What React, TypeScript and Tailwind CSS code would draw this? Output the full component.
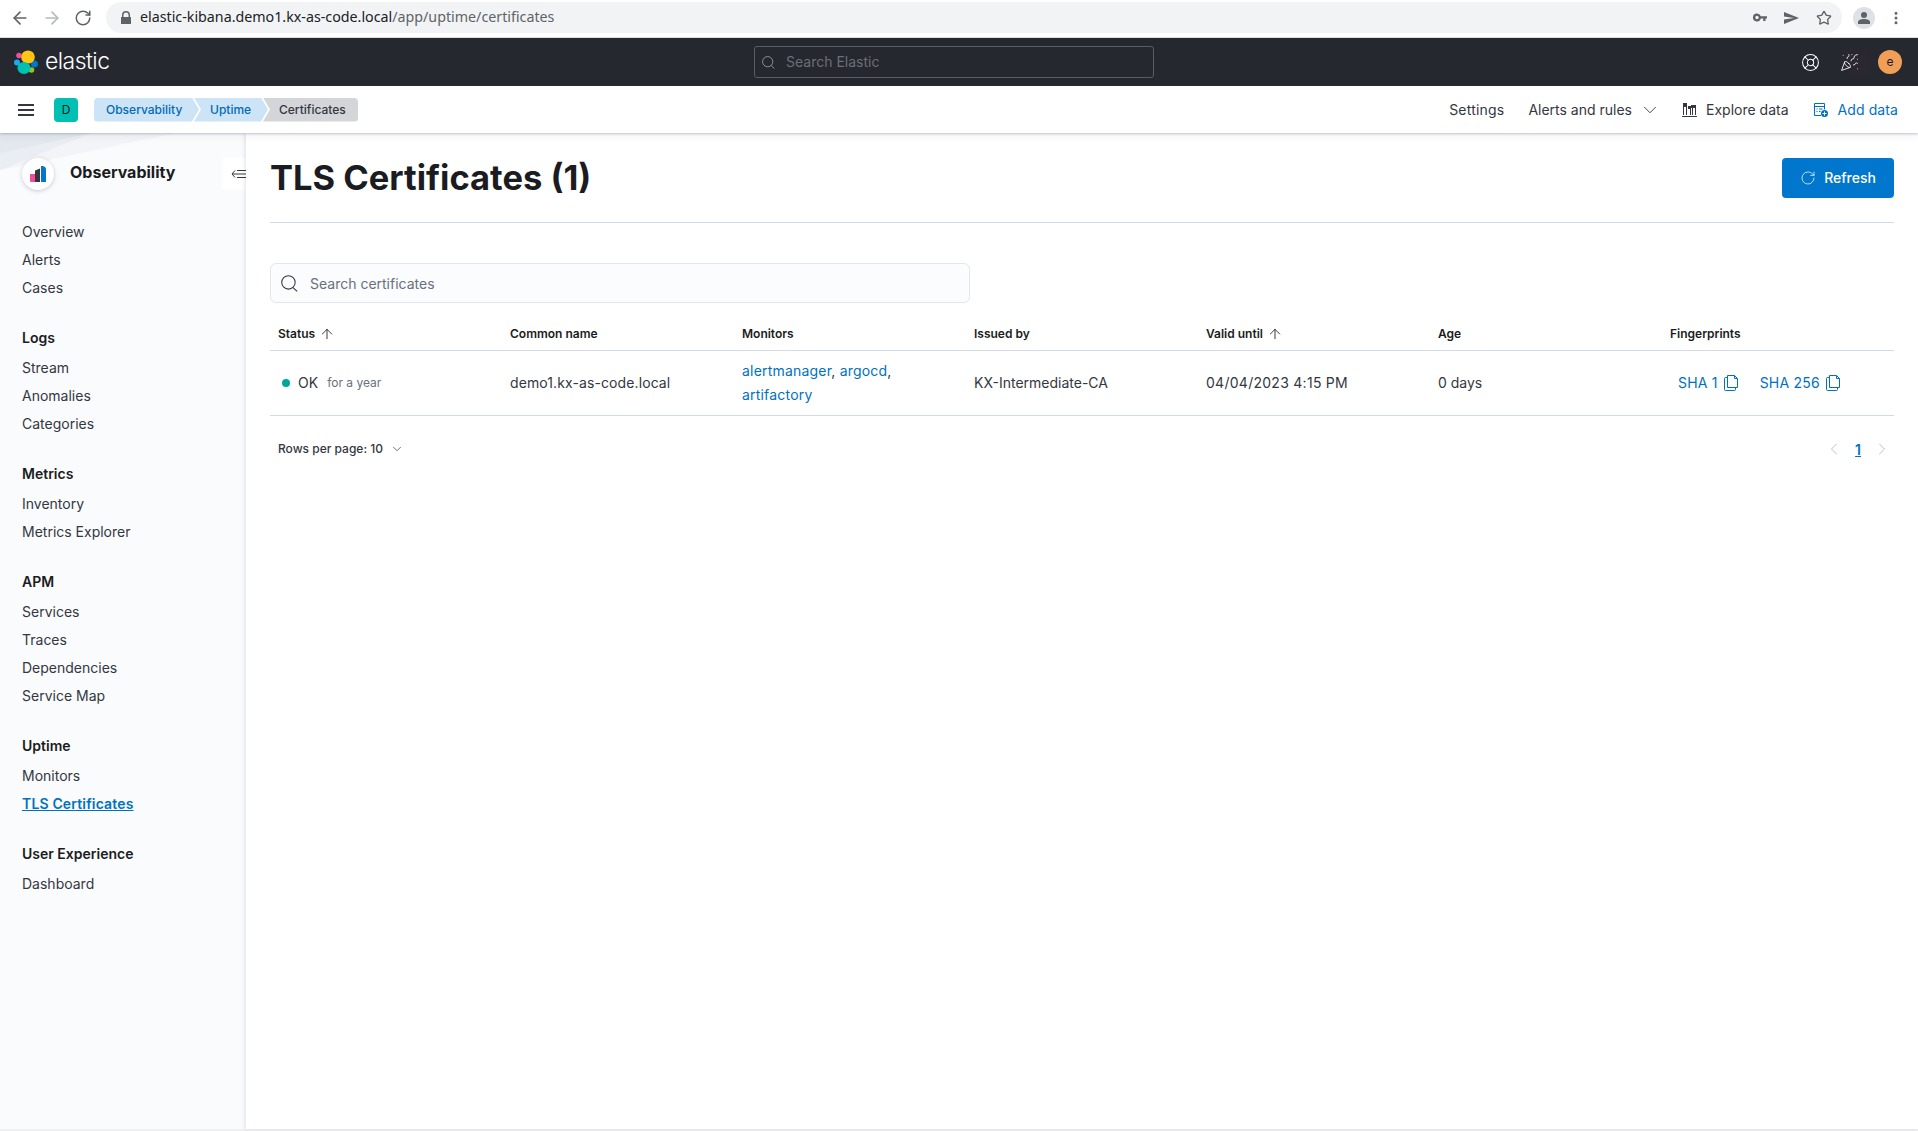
import React from "react";
import { ArrowLeft, ArrowRight, RotateCw, Star, ChevronDown, ChevronLeft, ChevronRight, ArrowUp, LifeBuoy, PartyPopper, EllipsisVertical } from "lucide-react";

function ElasticLogo() {
  return (
    <svg width="24" height="24" viewBox="0 0 24 24">
      <circle cx="5" cy="5.5" r="2.8" fill="#f04e98" />
      <circle cx="3" cy="12.5" r="3" fill="#1ba9f5" />
      <circle cx="20.5" cy="14" r="3.5" fill="#0077cc" />
      <circle cx="17.5" cy="20" r="2.8" fill="#93c90e" />
      <ellipse cx="14" cy="7" rx="6.8" ry="6.6" fill="#fec514" />
      <ellipse cx="10" cy="18" rx="6.6" ry="6" fill="#00bfb3" />
    </svg>
  );
}

function ExploreIcon() {
  return (
    <svg width="15" height="15" viewBox="0 0 15 15" fill="#343741">
      <path d="M0 14h15v1H0z" />
      <path d="M1 1h4v12H4V5H2v8H1z" />
      <path d="M5 4h4v9H8V7H6V4z" />
      <path d="M9 3h5v10h-1V6h-2v7h-1V6H9z" />
    </svg>
  );
}

function AddDataIcon() {
  return (
    <svg width="15" height="15" viewBox="0 0 15 15" fill="none">
      <path d="M8 13.5H1.5v-12h10v6" stroke="#0071c2" strokeWidth="1" />
      <path d="M1.5 4.5h10M3.5 7h1M6 7h3.5M3.5 9.5h1M6 9.5h1.5" stroke="#0071c2" strokeWidth="1" />
      <circle cx="11.5" cy="11.5" r="3.5" fill="#0071c2" />
      <path d="M11.5 9.5v4M9.5 11.5h4" stroke="#fff" strokeWidth="1" />
    </svg>
  );
}

function CopyIcon() {
  return (
    <svg width="15" height="16" viewBox="0 0 15 16" fill="none" stroke="#0071c2" strokeWidth="1">
      <path d="M3.5 .5h7l3 3v9h-10z" />
      <path d="M10.5 .5v3h3" />
      <path d="M3.5 2.5h-2a1 1 0 00-1 1v11a1 1 0 001 1h9a1 1 0 001-1v-2" />
    </svg>
  );
}

function EuiSearch({ stroke = "#343741", size = 16 }: { stroke?: string; size?: number }) {
  return (
    <svg width={size} height={size} viewBox="0 0 16 16" fill="none" stroke={stroke} strokeWidth="1">
      <circle cx="7" cy="7" r="6.3" />
      <path d="M11.3 11.8l3.9 3.7" />
    </svg>
  );
}

const navGroups: { title?: string; items: string[] }[] = [
  { items: ["Overview", "Alerts", "Cases"] },
  { title: "Logs", items: ["Stream", "Anomalies", "Categories"] },
  { title: "Metrics", items: ["Inventory", "Metrics Explorer"] },
  { title: "APM", items: ["Services", "Traces", "Dependencies", "Service Map"] },
  { title: "Uptime", items: ["Monitors", "TLS Certificates"] },
  { title: "User Experience", items: ["Dashboard"] },
];

function BrowserBar() {
  return (
    <div className="h-[38px] bg-white border-b border-[#dadce0] flex items-start shrink-0 pt-[2px] font-['Noto_Sans',sans-serif]">
      <div className="w-[106px] h-[31px] flex items-center pl-[10px] gap-[12px] text-[#5f6368]">
        <ArrowLeft size={20} strokeWidth={2} />
        <ArrowRight size={20} strokeWidth={2} className="text-[#b5b8bb]" />
        <RotateCw size={18} strokeWidth={2} />
      </div>
      <div className="w-[1736px] h-[31px] rounded-full bg-[#f1f3f4] flex items-center pl-[14px] pr-[10px]">
        <svg width="12" height="14" viewBox="0 0 12 14" fill="#5f6368" className="mr-[8px]">
          <path d="M2 6V4a4 4 0 018 0v2h1v7H1V6zm1.5 0h5V4a2.5 2.5 0 00-5 0z" />
        </svg>
        <span className="text-[14.25px] leading-[20px] -mt-[2px] text-[#202124]">
          elastic-kibana.demo1.kx-as-code.local<span className="text-[#5f6368]">/app/uptime/certificates</span>
        </span>
        <div className="ml-auto flex items-center gap-[17px] text-[#5f6368]">
          <svg width="14" height="9" viewBox="0 0 14 8" fill="#5f6368">
            <path d="M4 0a4 4 0 013.8 2.7H14V5h-1.5v2.5h-2.3V5H7.8A4 4 0 114 0zm0 2.3a1.7 1.7 0 100 3.4 1.7 1.7 0 000-3.4z" />
          </svg>
          <svg width="15" height="12" viewBox="0 0 15 12" fill="#5f6368">
            <path d="M0 0l15 6-15 6V7.5L10 6 0 4.5z" />
          </svg>
          <Star size={16} strokeWidth={2} />
        </div>
      </div>
      <div className="flex-1 h-[31px] flex items-center pl-[11px]">
        <div className="w-[22px] h-[22px] rounded-full bg-[#dee1e6] flex items-center justify-center">
          <svg width="12" height="12" viewBox="0 0 12 12" fill="#5f6368">
            <circle cx="6" cy="3" r="3" />
            <path d="M0 12V10c0-2 3-3 6-3s6 1 6 3v2z" />
          </svg>
        </div>
        <EllipsisVertical size={16} strokeWidth={2.5} className="ml-[13px] text-[#5f6368]" />
      </div>
    </div>
  );
}

function DarkHeader() {
  return (
    <div className="h-[48px] bg-[#25282f] flex items-center shrink-0 relative">
      <div className="flex items-center pl-[14px] w-[754px]">
        <ElasticLogo />
        <span className="ml-[7px] -mt-[1px] text-[23px] font-light text-white leading-none tracking-[-0.55px]">elastic</span>
      </div>
      <div className="w-[400px] h-[32px] border border-[#5a5d63] rounded-[3px] flex items-center pl-[7px]">
        <EuiSearch stroke="#a4a6a9" size={13} />
        <span className="ml-[11px] -mt-[1px] text-[14px] text-[#6c6f74]">Search Elastic</span>
      </div>
      <div className="flex-1 flex items-center justify-end pr-[16px] text-white">
        <LifeBuoy size={19} strokeWidth={1.3} />
        <div className="ml-[26px] w-[24px] h-[24px] bg-[#2a2731] rounded-[4px] relative">
          <PartyPopper size={19} strokeWidth={1.1} className="absolute -left-[6px] top-[3px]" />
        </div>
        <div className="ml-[8px] w-[24px] h-[24px] rounded-full bg-[#f19f58] text-[#1a1c21] text-[12px] flex items-center justify-center">e</div>
      </div>
    </div>
  );
}

function SubHeader() {
  return (
    <div className="h-[47px] bg-white flex items-center shrink-0 relative z-10 shadow-[0_1px_2px_rgba(105,112,125,0.35),0_3px_8px_rgba(105,112,125,0.1)] pl-[18px] pr-[20px]">
      <div className="flex flex-col gap-[3px] w-[16px]">
        <div className="h-[2px] bg-[#343741]" />
        <div className="h-[2px] bg-[#343741]" />
        <div className="h-[2px] bg-[#343741]" />
      </div>
      <div className="ml-[20px] w-[24px] h-[24px] rounded-[4px] bg-[#00bfb3] text-[#1a1c21] text-[12px] flex items-center justify-center">D</div>
      <div className="ml-[16px] flex items-center h-[24px] text-[12px] font-medium">
        <div className="w-[105px] h-full bg-[#cce4f5] text-[#006bb8] rounded-l-[4px] pl-[12px] flex items-center [clip-path:polygon(0_0,calc(100%-7px)_0,100%_50%,calc(100%-7px)_100%,0_100%)]">Observability</div>
        <div className="w-[74px] -ml-[5px] h-full bg-[#cce4f5] text-[#006bb8] pl-[16px] flex items-center [clip-path:polygon(0_0,calc(100%-7px)_0,100%_50%,calc(100%-7px)_100%,0_100%,7px_50%)]">Uptime</div>
        <div className="w-[95px] -ml-[5px] h-full bg-[#d3d5d9] text-[#343741] pl-[16px] rounded-r-[4px] flex items-center [clip-path:polygon(0_0,100%_0,100%_100%,0_100%,7px_50%)]">Certificates</div>
      </div>
      <div className="ml-auto flex items-center text-[14px] text-[#343741]">
        <span className="tracking-[0.2px]">Settings</span>
        <span className="ml-[24px]">Alerts and rules</span>
        <ChevronDown size={22} strokeWidth={1} className="ml-[7px]" />
        <span className="ml-[21px]"><ExploreIcon /></span>
        <span className="ml-[9px]">Explore data</span>
        <span className="ml-[24px]"><AddDataIcon /></span>
        <span className="ml-[10px] text-[#0071c2] tracking-[0.1px]">Add data</span>
      </div>
    </div>
  );
}

function Sidebar() {
  return (
    <aside className="w-[246px] shrink-0 bg-[#fafbfd] relative overflow-hidden">
      <svg className="absolute left-0 top-0" width="246" height="40" viewBox="0 0 246 40">
        <path d="M0 0H176L0 37z" fill="#f3f4f7" />
        <path d="M0 0H92L0 37z" fill="#eaedf2" />
        <path d="M0 0H92L0 20z" fill="#e3e7ee" />
      </svg>
      <div className="relative pt-[25px] flex items-center h-[57px]">
        <div className="ml-[22px] w-[32px] h-[32px] rounded-full bg-white shadow-[0_1px_4px_rgba(105,112,125,0.35)] flex items-center justify-center">
          <svg width="16" height="16" viewBox="0 0 16 16">
            <path d="M0 8h5v8H1a1 1 0 01-1-1z" fill="#f04e98" />
            <path d="M5 4.5L10 2.5V16H5z" fill="#343741" />
            <path d="M11 0h1a4 4 0 014 4v12h-5z" fill="#0077cc" />
          </svg>
        </div>
        <span className="ml-[16px] -mt-[4px] text-[16px] font-bold text-[#1a1c21]">Observability</span>
        <div className="ml-auto w-[24px] h-[32px] bg-white rounded-l-[4px] flex items-center justify-end">
          <svg width="15" height="16" viewBox="0 0 15 16" fill="none" stroke="#343741" strokeWidth="1">
            <path d="M4 4.5L1 8l3 3.5M1 8h14M6 4.5h9M6 11.5h9" />
          </svg>
        </div>
      </div>
      <nav className="relative pt-[28px] pl-[22px] flex flex-col gap-[22.1px] text-[14px] text-[#343741]">
        {navGroups.map((g, i) => (
          <div key={i} className="flex flex-col">
            {g.title && <div className="h-[29px] leading-[28px] font-semibold text-[#1a1c21] mb-[1px]">{g.title}</div>}
            {g.items.map((it) =>
              it === "TLS Certificates" ? (
                <div key={it} className="h-[28px] leading-[28px] font-semibold text-[#0071c2] underline tracking-[0.15px]">{it}</div>
              ) : (
                <div key={it} className="h-[28px] leading-[28px]">{it}</div>
              )
            )}
          </div>
        ))}
      </nav>
    </aside>
  );
}

function SortHead({ label }: { label: string }) {
  return (
    <div className="flex items-center gap-[4px]">
      {label}
      <ArrowUp size={16} strokeWidth={1.3} className="text-[#1a1c21]" />
    </div>
  );
}

function Main() {
  const col = "w-[232px] px-[8px]";
  return (
    <main className="flex-1 px-[24px] pt-[25px] min-w-0 bg-white relative shadow-[-1px_0_4px_rgba(105,112,125,0.2)]">
      <div className="h-[65px] border-b border-[#d3dae6] flex items-start justify-between">
        <h1 className="text-[34.5px] leading-[40px] font-bold text-[#1a1c21]">TLS Certificates (1)</h1>
        <button className="w-[112px] h-[40px] rounded-[4px] bg-[#0077cc] text-white text-[14px] font-medium flex items-center justify-center gap-[8px] pb-[1px]">
          <RotateCw size={16} strokeWidth={1.1} />
          Refresh
        </button>
      </div>
      <div className="mt-[40px] w-[700px] h-[40px] bg-[#fbfcfd] border border-[#e3e6ec] rounded-[6px] flex items-center pl-[10px]">
        <EuiSearch stroke="#343741" size={17} />
        <span className="ml-[12px] text-[14px] text-[#69707d]">Search certificates</span>
      </div>
      <div className="text-[14px] text-[#343741]">
        <div className="h-[48px] flex items-center border-b border-[#d3dae6] text-[12px] font-semibold text-[#1a1c21] pt-[15px]">
          <div className={col}><SortHead label="Status" /></div>
          <div className={col}>Common name</div>
          <div className={col}>Monitors</div>
          <div className={col}>Issued by</div>
          <div className={col}><SortHead label="Valid until" /></div>
          <div className={col}>Age</div>
          <div className={col}>Fingerprints</div>
        </div>
        <div className="h-[65px] flex items-center border-b border-[#d3dae6] pb-[1px]">
          <div className={`${col} flex items-center`}>
            <span className="ml-[4px] w-[8px] h-[8px] rounded-full bg-[#00a69b]" />
            <span className="ml-[8px]">OK</span>
            <span className="ml-[9px] mt-[1px] text-[12px] text-[#69707d]">for a year</span>
          </div>
          <div className={`${col} tracking-[0.1px]`}>demo1.kx-as-code.local</div>
          <div className={`${col} leading-[24px] text-[#0071c2] tracking-[0.2px]`}>
            alertmanager<span className="text-[#343741]">,</span> argocd<span className="text-[#343741]">,</span>
            <br />
            artifactory
          </div>
          <div className={col}>KX-Intermediate-CA</div>
          <div className={`${col} tracking-[0.27px]`}>04/04/2023 4:15 PM</div>
          <div className={col}>0 days</div>
          <div className={`${col} flex items-center text-[#0071c2] pl-[16px] tracking-[0.2px]`}>
            <span>SHA 1</span>
            <span className="ml-[6px]"><CopyIcon /></span>
            <span className="ml-[21px]">SHA 256</span>
            <span className="ml-[6px]"><CopyIcon /></span>
          </div>
        </div>
      </div>
      <div className="mt-[19px] h-[28px] flex items-center pl-[8px] text-[12px] text-[#343741]">
        <span className="font-medium">Rows per page: 10</span>
        <ChevronDown size={14} strokeWidth={1.2} className="ml-[7px]" />
        <div className="ml-auto flex items-center pr-[2px]">
          <ChevronLeft size={20} strokeWidth={1} className="text-[#a9b4c6]" />
          <span className="ml-[11px] text-[14px] font-semibold text-[#0071c2] underline">1</span>
          <ChevronRight size={20} strokeWidth={1} className="ml-[11px] text-[#a9b4c6]" />
        </div>
      </div>
    </main>
  );
}

export default function App() {
  return (
    <div className="w-full h-screen flex flex-col overflow-hidden bg-white font-['Inter',sans-serif]">
      <BrowserBar />
      <DarkHeader />
      <SubHeader />
      <div className="flex flex-1 min-h-0">
        <Sidebar />
        <Main />
      </div>
      <div className="h-[2px] bg-[#f0f0f1] shrink-0" />
    </div>
  );
}
